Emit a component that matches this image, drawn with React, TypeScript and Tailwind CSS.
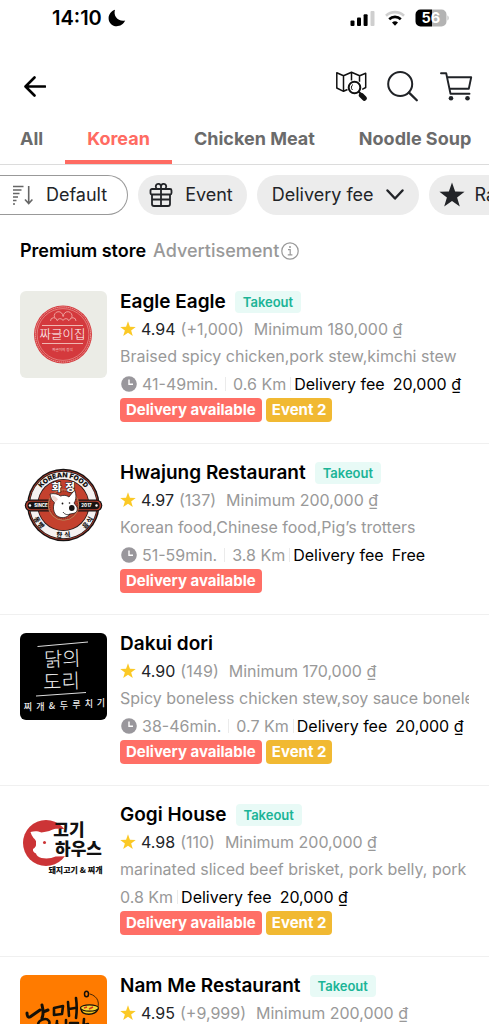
import type { ReactNode } from "react";

const KR = "'Noto Sans CJK KR', sans-serif";

type Store = {
  name: string;
  takeout: boolean;
  rating: string;
  reviews: string;
  minimum: string;
  menu: string;
  time?: string;
  distance: string;
  fee: string;
  event: boolean;
  logo: ReactNode;
};

function EagleLogo() {
  return (
    <svg viewBox="0 0 87 87" className="size-full" role="img" aria-label="Eagle Eagle logo">
      <rect width="87" height="87" fill="#ebece6" />
      <circle cx="43" cy="43.500" r="29" fill="#d4393d" />
      <circle cx="43" cy="43.500" r="27.600" fill="none" stroke="#f0b9b4" strokeWidth="0.8" strokeDasharray="1.500 0.6" />
      <circle cx="43" cy="43.500" r="25.900" fill="none" stroke="#eba7a3" strokeWidth="0.6" />
      <g fill="none" stroke="#f0aaa6" strokeWidth="0.9">
        <path d="M30.500 30a3.300 3.300 0 0 1 6.500-.8M37 30a3.200 3.200 0 0 1 6-.5 3.200 3.200 0 0 1 6 .5M49.500 29.200a3.300 3.300 0 0 1 6.500.8M34.500 26.500a4.300 4.300 0 1 1 8.300-1M43.500 25.500a4.300 4.300 0 1 1 8.300 1" />
      </g>
      <path d="M22 34.500H63M22 52.500H63" stroke="#f3c4be" strokeWidth="0.9" />
      <text x="42.500" y="48.300" textAnchor="middle" fontSize="12.500" fontWeight="300" fill="#fff" fontFamily={KR}>짜글이집</text>
      <text x="42.500" y="60" textAnchor="middle" fontSize="3.600" fill="#f6cfca" fontFamily={KR}>짜글이의 정석</text>
    </svg>
  );
}

function HwajungLogo() {
  return (
    <svg viewBox="0 0 87 87" className="size-full" role="img" aria-label="Hwajung Restaurant logo">
      <defs>
        <path id="hw-top" d="M15.700 43a27.600 27.600 0 0 1 55.200 0" />
        <path id="hw-bottom" d="M10.800 43a32.500 32.500 0 0 0 65 0" />
      </defs>
      <circle cx="43.300" cy="43" r="36.200" fill="#171313" />
      <circle cx="43.300" cy="43" r="34.800" fill="#b63e2d" />
      <circle cx="43.300" cy="43" r="34" fill="#171313" />
      <circle cx="43.300" cy="43" r="33.300" fill="#f5f1f0" />
      <circle cx="43.300" cy="43" r="26" fill="#251818" />
      <circle cx="43.300" cy="43" r="25.200" fill="#c4412e" />
      <text fontSize="6.800" fontWeight="900" fill="#171313" fontFamily="Inter, sans-serif">
        <textPath href="#hw-top" startOffset="50%" textAnchor="middle">KOREAN FOOD</textPath>
      </text>
      <rect x="4.800" y="37.500" width="77.500" height="12" rx="6" fill="#171313" />
      <rect x="6" y="38.700" width="75.100" height="9.600" rx="4.800" fill="#b63e2d" />
      <rect x="7.500" y="39.700" width="72" height="7.600" rx="3.800" fill="#171313" />
      <circle cx="10" cy="43.500" r="1.200" fill="#fff" />
      <circle cx="76.500" cy="43.500" r="1.200" fill="#fff" />
      <text x="21" y="45.200" textAnchor="middle" fontSize="4.400" fontWeight="800" fill="#fff" fontFamily="Inter, sans-serif">SINCE</text>
      <text x="66.500" y="45.200" textAnchor="middle" fontSize="4.400" fontWeight="800" fill="#fff" fontFamily="Inter, sans-serif">2017</text>
      <circle cx="43.500" cy="43" r="15.300" fill="#bb3e2b" stroke="#b98159" strokeWidth="1" />
      <circle cx="43.500" cy="43" r="13.800" fill="none" stroke="#7f3020" strokeWidth="1" strokeDasharray="1 1" />
      <path d="M30 32c4-1 8 0 10.500 2 3-1 6-1 8.500 1l5.500-7c2 4 2 10-.5 13l3 4c1 4-1 6-4 6.500l-3 .5c-3 4-9 5-13.500 1.500-3-3-4-8-2-13-3-2-4-5.500-4.500-8.500z" fill="#fff" stroke="#251818" strokeWidth="0.8" />
      <path d="M31.500 33.500c3 0 5.500 2 6.500 4l-3 3c-2-2-3-4-3.500-7z" fill="#f0d9d2" />
      <circle cx="42.500" cy="41.500" r="0.9" fill="#171313" />
      <circle cx="49.500" cy="41" r="0.8" fill="#171313" />
      <ellipse cx="51.800" cy="46" rx="2.800" ry="3" fill="#171313" />
      <path d="M43 50c2 3 5 3 7 2" fill="none" stroke="#171313" strokeWidth="0.8" />
      <g fontSize="10.500" fontWeight="900" fill="#fff" stroke="#251818" strokeWidth="1.200" paintOrder="stroke" fontFamily={KR} textAnchor="middle">
        <text x="36.500" y="28.500">화</text>
        <text x="50" y="28.500">정</text>
      </g>
      <g fontSize="6.500" fontWeight="900" fill="#171313" fontFamily={KR} textAnchor="middle">
        <text><textPath href="#hw-bottom" startOffset="20%">동 빵</textPath></text>
        <text><textPath href="#hw-bottom" startOffset="50%">한 &#160;식</textPath></text>
        <text><textPath href="#hw-bottom" startOffset="80%">음 식</textPath></text>
      </g>
    </svg>
  );
}

function DakuiLogo() {
  return (
    <svg viewBox="0 0 87 87" className="size-full" role="img" aria-label="Dakui dori logo">
      <rect width="87" height="87" fill="#000" />
      <path d="M17.500 13.500L68 9M16 63l50-3.500" stroke="#ddd" strokeWidth="1" />
      <text x="42.500" y="33" textAnchor="middle" fontSize="20" fontWeight="300" fill="#eee" fontFamily={KR} transform="rotate(-2 43 30)">닭의</text>
      <text x="41.500" y="55.500" textAnchor="middle" fontSize="20" fontWeight="300" fill="#eee" fontFamily={KR} transform="rotate(-2 43 50)">도리</text>
      <g fontSize="9" fontWeight="500" fill="#eee" fontFamily={KR} textAnchor="middle">
        <text x="8" y="77">찌</text>
        <text x="20.500" y="76.500">개</text>
        <text x="32" y="76">&amp;</text>
        <text x="44" y="75.500">두</text>
        <text x="56.500" y="75">루</text>
        <text x="69" y="73.500">치</text>
        <text x="81" y="72.500">기</text>
      </g>
    </svg>
  );
}

function GogiLogo() {
  return (
    <svg viewBox="0 0 87 87" className="size-full" role="img" aria-label="Gogi House logo">
      <circle cx="26" cy="39" r="23" fill="#cc3436" />
      <path d="M10.500 28c4-1 7-1 11 .5 4-1 7-1 10-2.500 3-1.500 6-1.500 9-1h13v27l-18 .5c-4 2-9 2.500-14 1.500-3-.5-5-2.500-5.500-4.500-2-.5-3.500-2.500-3-4.500 2-1 3.500-3 3-5.500.5-3-1-4-2.500-5.500-1.500-2-2.500-4-3-6z" fill="#fff" />
      <circle cx="24.500" cy="38.500" r="1.500" fill="#cc3436" />
      <text x="49" y="32" textAnchor="middle" fontSize="17" fontWeight="900" fill="#111" fontFamily={KR}>고기</text>
      <text x="58.500" y="51" textAnchor="middle" fontSize="17" fontWeight="900" fill="#111" fontFamily={KR}>하우스</text>
      <text x="55.500" y="69" textAnchor="middle" fontSize="8" fontWeight="900" fill="#111" fontFamily={KR}>돼지고기 &amp; 찌개</text>
    </svg>
  );
}

function NamMeLogo() {
  return (
    <svg viewBox="0 0 87 87" className="size-full" role="img" aria-label="Nam Me Restaurant logo">
      <rect width="87" height="87" fill="#ff7b00" />
      <g fill="none" stroke="#141008" strokeLinecap="round" strokeLinejoin="round">
        <path d="M7 38c0 3 1 5 3 4l10-7M22 30c1 4 2 9 0 13M23 37l5-2" strokeWidth="3" />
        <path d="M18 50c0-5 8-8 11-4 3 5-8 9-11 4z" strokeWidth="2.500" />
        <path d="M34 33l9-2-1 8-8 1zM48 27l1 14M49 34l6-1M56 23c1 7 1 13 0 20" strokeWidth="2.600" />
        <path d="M37 46c0 4-2 7-5 9M37 49l5 4M46 45v10M50 48h8M50 48v7h7M64 44l-1 12M64 50l4-1" strokeWidth="2.600" />
        <path d="M70 19c8 2 11 10 6 17" strokeWidth="0.8" />
        <ellipse cx="66.500" cy="19" rx="2" ry="2.800" strokeWidth="1.500" />
        <path d="M61 34c1 7 14 7 17 0" fill="#f4c51e" strokeWidth="1.500" />
        <ellipse cx="69.500" cy="33" rx="9" ry="3.200" fill="#f6d435" strokeWidth="1.200" />
      </g>
      <path d="M64 33l3-1M69 34l4-2" stroke="#d7321b" strokeWidth="1.400" />
      <path d="M16 68h54" stroke="#141008" strokeWidth="2" />
    </svg>
  );
}

const stores: Store[] = [
  { name: "Eagle Eagle", takeout: true, rating: "4.94", reviews: "(+1,000)", minimum: "180,000 ₫", menu: "Braised spicy chicken,pork stew,kimchi stew", time: "41-49min.", distance: "0.6 Km", fee: "20,000 ₫", event: true, logo: <EagleLogo /> },
  { name: "Hwajung Restaurant", takeout: true, rating: "4.97", reviews: "(137)", minimum: "200,000 ₫", menu: "Korean food,Chinese food,Pig’s trotters", time: "51-59min.", distance: "3.8 Km", fee: "Free", event: false, logo: <HwajungLogo /> },
  { name: "Dakui dori", takeout: false, rating: "4.90", reviews: "(149)", minimum: "170,000 ₫", menu: "Spicy boneless chicken stew,soy sauce boneless chicken", time: "38-46min.", distance: "0.7 Km", fee: "20,000 ₫", event: true, logo: <DakuiLogo /> },
  { name: "Gogi House", takeout: true, rating: "4.98", reviews: "(110)", minimum: "200,000 ₫", menu: "marinated sliced beef brisket, pork belly, pork rib", distance: "0.8 Km", fee: "20,000 ₫", event: true, logo: <GogiLogo /> },
  { name: "Nam Me Restaurant", takeout: true, rating: "4.95", reviews: "(+9,999)", minimum: "200,000 ₫", menu: "Korean food,grilled pork,stew", time: "40-48min.", distance: "1.2 Km", fee: "20,000 ₫", event: true, logo: <NamMeLogo /> },
];

function StarIcon({ className }: { className: string }) {
  return (
    <svg viewBox="0 0 24 24" className={className} fill="currentColor" aria-hidden="true">
      <path d="M12 0.500l2.900 8.200 8.700.2-6.900 5.300 2.500 8.400L12 17.600l-7.200 5 2.500-8.400L.4 8.900l8.700-.2z" />
    </svg>
  );
}

function StatusBar() {
  return (
    <div className="flex h-9 items-center justify-between pr-10 pl-[52px]">
      <div className="flex items-center gap-[6px]">
        <span className="text-xl leading-6 font-semibold">14:10</span>
        <svg viewBox="0 0 18 18" className="size-[18px]" aria-hidden="true">
          <path d="M7 0.800C5 7 10 13 17.200 11.600 15.500 15.500 12 17.300 8.700 17.300 4.200 17.300.6 13.800.6 9.200.6 5.400 3.200 2 7 .8z" />
        </svg>
      </div>
      <div className="flex items-center gap-[10px]">
        <svg viewBox="0 0 25 16" className="h-4 w-[25px]" aria-hidden="true">
          <rect x="0.500" y="10.500" width="4" height="5.500" rx="1" />
          <rect x="7" y="7.500" width="4" height="8.500" rx="1" />
          <rect x="13.600" y="4.200" width="4" height="11.800" rx="1" />
          <rect x="20.500" y="1" width="4" height="15" rx="1" fill="#cfcfcf" />
        </svg>
        <svg viewBox="0 0 20 16" className="h-4 w-5" fill="none" strokeWidth="2.600" aria-hidden="true">
          <path d="M1 5.700a13 13 0 0 1 18 0" stroke="#cfcfcf" />
          <path d="M4.200 9.200a8.300 8.300 0 0 1 11.600 0" stroke="#000" />
          <path d="M10 15.800l-3-3.200a4.300 4.300 0 0 1 6 0z" fill="#000" />
        </svg>
        <svg viewBox="0 0 34 18" className="h-[18px] w-[34px]" aria-hidden="true">
          <path d="M5.500 0.500H17v17H5.500a5 5 0 0 1-5-5v-7a5 5 0 0 1 5-5z" />
          <path d="M17 .5h9.500a5 5 0 0 1 5 5v7a5 5 0 0 1-5 5H17zM32.500 6.500c1.500.5 1.500 4.500 0 5z" fill="#b3b3b3" />
          <text x="15.800" y="14.300" textAnchor="middle" fontSize="14.500" fontWeight="700" fill="#fff" fontFamily="Inter, sans-serif">56</text>
        </svg>
      </div>
    </div>
  );
}

function Header() {
  return (
    <header className="mt-[18px] flex h-16 items-center justify-between pr-4 pl-6">
      <button type="button" aria-label="Back">
        <svg viewBox="0 0 22 22" className="size-[22px]" fill="none" stroke="#000" strokeWidth="2.600" strokeLinecap="round" strokeLinejoin="round" aria-hidden="true">
          <path d="M21 11.500H1.800M10.500 2.500L1.500 11.500l9 9" />
        </svg>
      </button>
      <div className="flex items-center gap-5">
        <button type="button" aria-label="Map search">
          <svg viewBox="0 0 32 32" className="size-8" fill="none" stroke="#111" strokeWidth="1.500" strokeLinejoin="round" aria-hidden="true">
            <path d="M12.500 19.500L8.500 21.300 1.800 18V2.800l6.700 3 8-3.600 8.200 3.600 6-2.500V17.500l-3.500 1.800M8.500 5.800v15.500M16.500 2.200v8.300M24.500 5.800v6" />
            <circle cx="19.500" cy="17.500" r="5.800" strokeWidth="2" />
            <path d="M17.500 20a3.500 3.500 0 0 1 .5-5.500" strokeWidth="1" />
            <path d="M26.300 25.300l3 3" strokeWidth="5" strokeLinecap="round" />
            <path d="M23.500 21.500l2 2" strokeWidth="2" />
          </svg>
        </button>
        <button type="button" aria-label="Search">
          <svg viewBox="0 0 32 32" className="size-8" fill="none" stroke="#202327" strokeWidth="2" strokeLinecap="round" aria-hidden="true">
            <circle cx="13.200" cy="14" r="12" />
            <path d="M22 22.600L29.800 30.300" strokeWidth="2.300" />
          </svg>
        </button>
        <button type="button" aria-label="Cart">
          <svg viewBox="0 0 34 32" className="h-8 w-[34px]" fill="none" stroke="#202327" strokeWidth="1.900" strokeLinecap="round" strokeLinejoin="round" aria-hidden="true">
            <path d="M2 3.300h5.200l4.300 20.400h19M8.200 7.200h24l-2.400 11.600H10.500" />
            <circle cx="12" cy="28.300" r="2.300" fill="#202327" stroke="none" />
            <circle cx="28.500" cy="28.300" r="2.300" fill="#202327" stroke="none" />
          </svg>
        </button>
      </div>
    </header>
  );
}

const tabs = ["All", "Korean", "Chicken Meat", "Noodle Soup"];

function Tabs() {
  return (
    <nav className="flex h-[47px] overflow-x-auto border-b border-[#dcdcdc] [scrollbar-width:none]">
      {tabs.map((tab) => (
        <button
          key={tab}
          type="button"
          className={
            tab === "Korean"
              ? "shrink-0 border-b-4 border-[#ff6b62] px-[22px] text-lg font-bold text-[#ff6b62]"
              : "shrink-0 border-b-4 border-transparent px-[22px] text-lg font-bold text-[#6b6b6b] first:pl-5"
          }
        >
          {tab}
        </button>
      ))}
    </nav>
  );
}

function Filters() {
  return (
    <div className="mt-[10px] flex gap-[10px] overflow-x-auto text-lg text-[#222428] [scrollbar-width:none]">
      <button type="button" className="flex h-10 shrink-0 items-center gap-3 rounded-r-full border border-l-0 border-[#999] pr-5 pl-3">
        <svg viewBox="0 0 22 22" className="size-[22px]" fill="none" stroke="#666" strokeWidth="1.600" aria-hidden="true">
          <path d="M1 2.500h10.500M1 6h8.500M1 9.500h6.500M1 13h5M1 16.500h3.500M1 20h2" />
          <path d="M16.700 2v17M13 15.500l3.700 4 3.700-4" />
        </svg>
        Default
      </button>
      <button type="button" className="flex h-10 shrink-0 items-center gap-3 rounded-full bg-[#ececec] pr-[14px] pl-[11px]">
        <svg viewBox="0 0 24 24" className="size-6" fill="none" stroke="#222428" strokeWidth="1.800" strokeLinejoin="round" aria-hidden="true">
          <rect x="1.500" y="6" width="21" height="5.500" rx="1.500" />
          <path d="M3 11.500V21a2 2 0 0 0 2 2h14a2 2 0 0 0 2-2v-9.500M12 6v17M3 16.500h18" />
          <path d="M12 6H8.500a2.600 2.600 0 1 1 3.500-2.600V6M12 6h3.500A2.600 2.600 0 1 0 12 3.400" />
        </svg>
        Event
      </button>
      <button type="button" className="flex h-10 shrink-0 items-center gap-3 rounded-full bg-[#ececec] px-[15px]">
        Delivery fee
        <svg viewBox="0 0 18 12" className="h-3 w-[18px]" fill="none" stroke="#222428" strokeWidth="2.400" strokeLinecap="round" strokeLinejoin="round" aria-hidden="true">
          <path d="M1.500 1.500L9 9.500l7.500-8" />
        </svg>
      </button>
      <button type="button" className="flex h-10 shrink-0 items-center gap-[10px] rounded-full bg-[#ececec] pr-4 pl-[10px]">
        <StarIcon className="size-[26px] text-[#222428]" />
        Rating
      </button>
    </div>
  );
}

function StoreItem({ store }: { store: Store }) {
  return (
    <li className="border-b border-[#f0f0f0]">
      <a href="#store" className="flex gap-[13px] px-5 pt-4 pb-[21px]">
        <div className="mt-[2px] size-[87px] shrink-0 overflow-hidden rounded-md">{store.logo}</div>
        <div className="min-w-0 flex-1 overflow-hidden whitespace-nowrap text-[#999]">
          <div className="flex h-[26px] items-center gap-[9px]">
            <h3 className="text-[19px] font-semibold text-black">{store.name}</h3>
            {store.takeout && (
              <span className="rounded bg-[#e8faf6] px-2 text-[13px] leading-[22px] font-semibold text-[#1bb497]">Takeout</span>
            )}
          </div>
          <div className="flex h-[27px] items-center text-base">
            <StarIcon className="mr-[5px] size-4 text-[#fbc926]" />
            <span className="mr-[5px] text-[#222428]">{store.rating}</span>
            <span className="mr-[10px]">{store.reviews}</span>
            <span>Minimum {store.minimum}</span>
          </div>
          <p className="h-7 text-base leading-7">{store.menu}</p>
          <div className="flex h-7 items-center text-base">
            {store.time && (
              <>
                <svg viewBox="0 0 16 16" className="mr-[5px] ml-px size-4" aria-hidden="true">
                  <circle cx="8" cy="8" r="7.800" fill="#99979c" />
                  <path d="M8 3.500V8.300h4" fill="none" stroke="#fff" strokeWidth="1.400" />
                </svg>
                <span>{store.time}</span>
                <span className="mx-[7px] h-[14px] w-px bg-[#ebebeb]" />
              </>
            )}
            <span>{store.distance}</span>
            <span className="mr-[3px] ml-1 h-[14px] w-px bg-[#ebebeb]" />
            <span className="mr-2 text-black">Delivery fee</span>
            <span className="text-black">{store.fee}</span>
          </div>
          <div className="flex h-6 gap-1 text-[15px] leading-6 font-bold text-white">
            <span className="rounded bg-[#ff6f66] px-[6px]">Delivery available</span>
            {store.event && <span className="rounded bg-[#f1b932] px-[6px]">Event 2</span>}
          </div>
        </div>
      </a>
    </li>
  );
}

export default function App() {
  return (
    <div className="h-screen overflow-hidden bg-white font-['Inter',sans-serif] text-black">
      <StatusBar />
      <Header />
      <Tabs />
      <Filters />
      <main>
        <div className="mt-[22px] flex h-7 items-center gap-[7px] text-lg">
          <h2 className="pl-5 font-semibold">Premium store</h2>
          <button type="button" className="flex items-center gap-[2px] font-medium text-[#999]">
            Advertisement
            <svg viewBox="0 0 18 18" className="size-[18px]" fill="none" stroke="#999" strokeWidth="1.200" aria-hidden="true">
              <circle cx="9" cy="9" r="8.200" />
              <path d="M7 7.700h2.200v5M6.800 12.900h4.600" />
              <circle cx="9" cy="4.900" r="1" fill="#999" stroke="none" />
            </svg>
          </button>
        </div>
        <ul className="mt-2">
          {stores.map((store) => (
            <StoreItem key={store.name} store={store} />
          ))}
        </ul>
      </main>
    </div>
  );
}
